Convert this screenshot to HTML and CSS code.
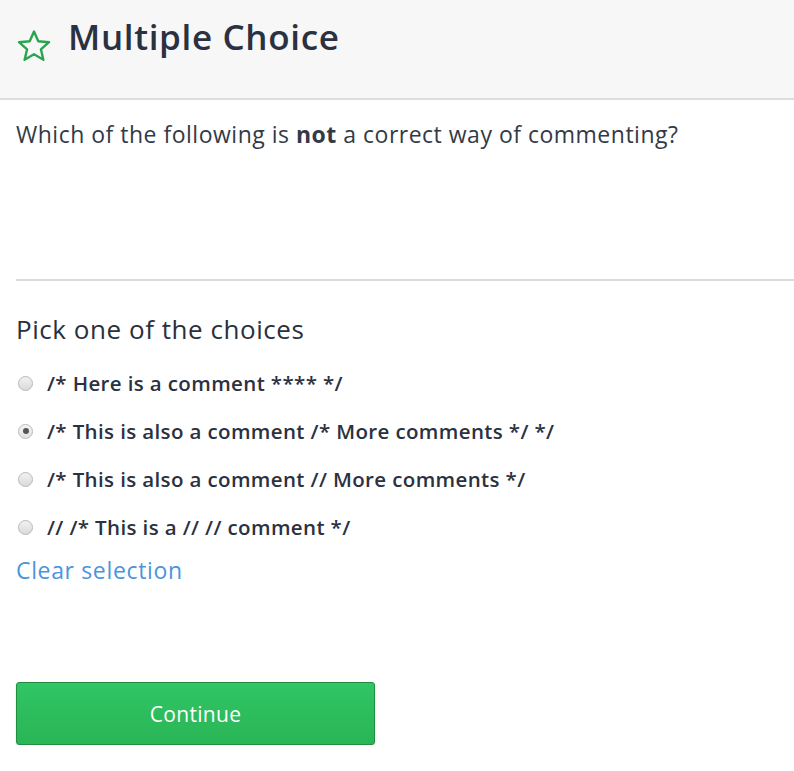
FILE: index.html
```html
<!DOCTYPE html>
<html>
<head>
<meta charset="utf-8">
<link rel="stylesheet" href="styles.css">
</head>
<body>
<header class="header">
  <svg class="star" viewBox="0 0 36 34" width="36" height="34">
    <path d="M18 2.5 L22.3 12.3 L33 13.2 L24.9 20.3 L27.4 30.8 L18 25.2 L8.6 30.8 L11.1 20.3 L3 13.2 L13.7 12.3 Z" fill="none" stroke="#2aa54f" stroke-width="2.4" stroke-linejoin="round"/>
  </svg>
  <h1 class="title">Multiple Choice</h1>
</header>
<main class="content">
  <p class="question">Which of the following is <b>not</b> a correct way of commenting?</p>
  <hr class="divider">
  <h2 class="pick">Pick one of the choices</h2>
  <ul class="choices">
    <li class="choice"><span class="radio"></span><span class="label">/* Here is a comment **** */</span></li>
    <li class="choice"><span class="radio checked"></span><span class="label">/* This is also a comment /* More comments */ */</span></li>
    <li class="choice"><span class="radio"></span><span class="label">/* This is also a comment // More comments */</span></li>
    <li class="choice"><span class="radio"></span><span class="label">// /* This is a // // comment */</span></li>
  </ul>
  <a class="clear">Clear selection</a>
  <button class="continue">Continue</button>
</main>
</body>
</html>
```
FILE: styles.css
```css
* { box-sizing: border-box; }
body {
  margin: 0;
  font-family: "Open Sans", Lato, sans-serif;
  color: #2a303c;
  background: #fff;
}
.header {
  height: 100px;
  background: #f7f7f8;
  border-bottom: 2px solid #dedede;
  display: flex;
  align-items: flex-start;
  padding: 15px 0 0 16px;
}
.star { margin-top: 14px; margin-right: 16px; }
.title {
  margin: 0;
  font-size: 35px;
  font-weight: 600;
  line-height: 44px;
  color: #2b3140;
  letter-spacing: 0.65px;
}
.content { padding: 0 0 0 16px; }
.question {
  margin: 18px 0 0;
  font-size: 23px;
  line-height: 32px;
  letter-spacing: 0.5px;
  color: #333a46;
}
.question b { font-weight: 700; }
.divider {
  margin: 129px 0 0;
  border: 0;
  border-top: 2px solid #dcdcdc;
}
.pick {
  margin: 32px 0 0;
  font-size: 26px;
  font-weight: 400;
  line-height: 32px;
  letter-spacing: 0.55px;
}
.choices { list-style: none; margin: 14px 0 0; padding: 0; }
.choice {
  display: flex;
  align-items: center;
  height: 48px;
}
.radio {
  width: 15px;
  height: 15px;
  border-radius: 50%;
  border: 1px solid #b9b9b9;
  background: linear-gradient(#f1f1f1, #dadada);
  margin: 0 14px 0 2px;
  flex: none;
  display: flex;
  align-items: center;
  justify-content: center;
}
.radio.checked { background: linear-gradient(#f4f4f4, #e2e2e2); }
.radio.checked::after {
  content: "";
  width: 6px;
  height: 6px;
  border-radius: 50%;
  background: #555;
}
.label {
  font-size: 20.5px;
  font-weight: 600;
  letter-spacing: 0.37px;
  color: #2b3140;
}
.clear {
  display: block;
  margin-top: 3px;
  font-size: 23px;
  line-height: 32px;
  color: #4a95dc;
  letter-spacing: 0.65px;
}
.continue {
  display: block;
  margin-top: 96px;
  width: 359px;
  height: 63px;
  border: 1px solid #1f8f3f;
  border-radius: 3px;
  background: linear-gradient(#30c565, #2ab556);
  color: #fff;
  font-family: inherit;
  font-size: 21px;
  letter-spacing: 0.3px;
  box-shadow: 0 1px 2px rgba(0,0,0,0.15);
}
```
